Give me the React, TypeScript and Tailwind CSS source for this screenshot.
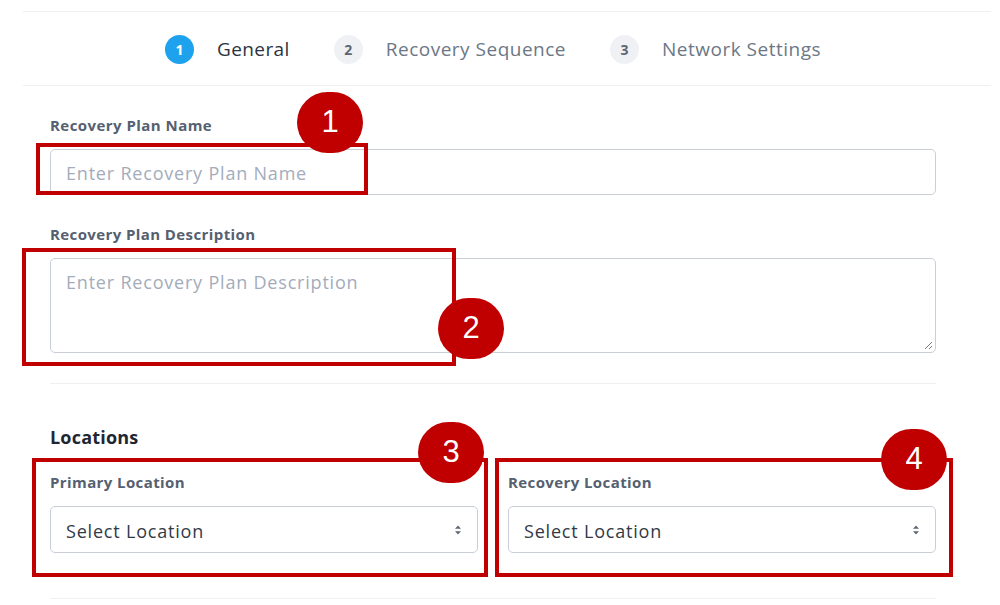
import React from "react";

const font = { fontFamily: "'Open Sans', Lato, Arial, sans-serif" };

function Step({ n, label, active }: { n: number; label: string; active?: boolean }) {
  return (
    <div className="flex items-center">
      <div
        className={
          active
            ? "w-[29px] h-[29px] rounded-full bg-[#1fa2ee] text-white flex items-center justify-center text-[14px] font-bold"
            : "w-[29px] h-[29px] rounded-full bg-[#eff1f4] text-[#5d6673] flex items-center justify-center text-[14px] font-bold"
        }
      >
        {n}
      </div>
      <div
        className={
          active
            ? "ml-[23px] text-[19px] tracking-[0.4px] text-[#2b3340]"
            : "ml-[23px] text-[19px] tracking-[0.5px] text-[#6c7786]"
        }
      >
        {label}
      </div>
    </div>
  );
}

function UpDown() {
  return (
    <svg width="8" height="12" viewBox="0 0 8 12" className="shrink-0">
      <path d="M4 1.5 L7 4.8 H1 Z" fill="#5d6673" />
      <path d="M4 10.5 L7 7.2 H1 Z" fill="#5d6673" />
    </svg>
  );
}

function Select({ label }: { label: string }) {
  return (
    <div className="flex flex-col">
      <div className="h-5 leading-5 text-[15px] font-bold tracking-[0.4px] text-[#556070]">{label}</div>
      <div className="mt-[14px] h-[47px] rounded-[5px] border border-[#c9ced8] flex items-center justify-between pl-[15px] pr-[15px]">
        <span className="text-[18px] tracking-[0.8px] text-[#323a46] pt-[3px]">Select Location</span>
        <UpDown />
      </div>
    </div>
  );
}

function Badge({ n, cls }: { n: number; cls: string }) {
  return (
    <div
      className={
        "absolute w-[66px] h-[61px] rounded-full bg-[#c00000] text-white flex items-center justify-center text-[31px] " +
        cls
      }
      style={{ fontFamily: "Arial, 'Liberation Sans', sans-serif" }}
    >
      {n}
    </div>
  );
}

export default function App() {
  return (
    <div className="relative w-[1000px] h-[605px] bg-white overflow-hidden" style={font}>
      <div className="mt-[11px] ml-[23px] w-[968px] h-[75px] border-t border-b border-[#eef0f3] flex items-center pl-[142px] pt-[2px]">
        <div className="flex items-center gap-[44px]">
          <Step n={1} label="General" active />
          <Step n={2} label="Recovery Sequence" />
          <Step n={3} label="Network Settings" />
        </div>
      </div>

      <div className="ml-[50px] w-[886px] flex flex-col">
        <div className="mt-[29px] h-5 leading-5 text-[15px] font-bold tracking-[0.45px] text-[#556070]">Recovery Plan Name</div>
        <div className="mt-[14px] h-[46px] rounded-[5px] border border-[#c9ced8] flex items-center pl-[15px]">
          <span className="text-[18px] tracking-[0.8px] text-[#a3acbb] pt-[3px]">Enter Recovery Plan Name</span>
        </div>

        <div className="mt-[29px] h-5 leading-5 text-[15px] font-bold tracking-[0.4px] text-[#556070]">Recovery Plan Description</div>
        <div className="relative mt-[14px] h-[95px] rounded-[5px] border border-[#c9ced8] pl-[15px] pt-[10px]">
          <span className="text-[18px] tracking-[0.8px] text-[#a3acbb]">Enter Recovery Plan Description</span>
          <svg className="absolute right-[2px] bottom-[2px]" width="10" height="10" viewBox="0 0 10 10">
            <path d="M9 2 L2 9 M9 6 L6 9" stroke="#777" strokeWidth="1" />
          </svg>
        </div>

        <div className="mt-[30px] border-t border-[#eef0f3]" />

        <div className="mt-[41px] h-6 leading-6 text-[18px] font-bold tracking-[0.2px] text-[#1f2633]">Locations</div>

        <div className="mt-[23px] grid grid-cols-2 gap-[30px]">
          <Select label="Primary Location" />
          <Select label="Recovery Location" />
        </div>

        <div className="mt-[45px] border-t border-[#eef0f3]" />
      </div>

      {/* annotation boxes */}
      <div className="absolute left-[36px] top-[143px] w-[332px] h-[52px] border-[4px] border-[#c00000]" />
      <div className="absolute left-[22px] top-[248px] w-[434px] h-[118px] border-[4px] border-[#c00000]" />
      <div className="absolute left-[32px] top-[458px] w-[456px] h-[119px] border-[4px] border-[#c00000]" />
      <div className="absolute left-[495px] top-[458px] w-[458px] h-[119px] border-[4px] border-[#c00000]" />

      <Badge n={1} cls="left-[297px] top-[92px]" />
      <Badge n={2} cls="left-[438px] top-[298px]" />
      <Badge n={3} cls="left-[418px] top-[422px]" />
      <Badge n={4} cls="left-[881px] top-[429px]" />
    </div>
  );
}
